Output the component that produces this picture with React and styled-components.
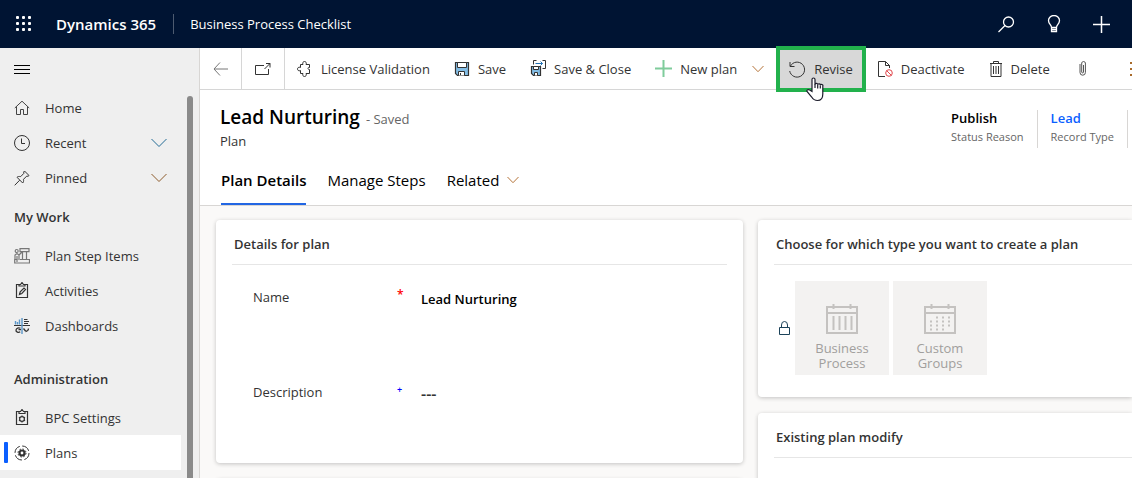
import React from "react";
import styled, { createGlobalStyle, css } from "styled-components";

const GlobalStyle = createGlobalStyle`
  *, *::before, *::after { box-sizing: border-box; }
  body { margin: 0; font-family: "Open Sans", "Noto Sans", sans-serif; font-size: 13px; color: #333; background: #faf9f8; }
  button, input { font: inherit; color: inherit; }
  button { border: 0; padding: 0; background: none; cursor: pointer; }
  a { color: inherit; text-decoration: none; }
  h1, h2, h3, p, ul, dl, dd, dt { margin: 0; padding: 0; }
  ul { list-style: none; }
  svg { display: block; flex: none; }
`;

const Page = styled.div`
  display: flex;
  flex-direction: column;
  height: 100vh;
  overflow: hidden;
`;
const TopBar = styled.header`
  display: flex;
  align-items: center;
  flex: none;
  height: 48px;
  padding: 0 22px 0 16px;
  background: #001433;
  color: #fff;
`;
const Brand = styled.a`
  margin-left: 24px;
  font-size: 15px;
  font-weight: 600;
`;
const BrandRule = styled.span`
  width: 1px;
  height: 20px;
  margin: 0 16px 0 17px;
  background: #4d5b70;
`;
const AppName = styled.a`
  font-size: 13px;
`;
const TopActions = styled.div`
  display: flex;
  gap: 31px;
  margin-left: auto;
`;
const IconButton = styled.button`
  display: flex;
  align-items: center;
  justify-content: center;
`;
const Shell = styled.div`
  display: grid;
  grid-template-columns: 200px minmax(0, 1fr);
  flex: 1;
  min-height: 0;
`;
const Sidebar = styled.aside`
  display: flex;
  flex-direction: column;
  min-height: 0;
  background: #efefef;
  border-right: 1px solid #d8d6d4;
`;
const MenuRow = styled.div`
  display: flex;
  align-items: center;
  flex: none;
  height: 42px;
  padding-left: 14px;
`;
const NavArea = styled.div`
  display: flex;
  flex: 1;
  min-height: 0;
`;
const Nav = styled.nav`
  flex: 1;
  overflow: hidden;
`;
const ScrollTrack = styled.div`
  width: 18px;
  padding: 6px 6px 0;
`;
const ScrollThumb = styled.div`
  height: 100%;
  border-radius: 3px 3px 0 0;
  background: #8a8a8a;
`;
const NavHeading = styled.h2`
  display: flex;
  align-items: center;
  height: 43px;
  padding-left: 14px;
  font-size: 13px;
  font-weight: 600;
  ul + & { margin-top: ${(p) => (p.$spaced ? 14 : 0)}px; }
`;
const NavLink = styled.a`
  position: relative;
  display: flex;
  align-items: center;
  gap: 15px;
  height: 35px;
  padding: 0 14px;
  ${(p) => p.$active && css`
    background: #fff;
    &::before {
      content: "";
      position: absolute;
      left: 4px;
      top: 7px;
      width: 4px;
      height: 21px;
      border-radius: 1px;
      background: #0b5fff;
    }
  `}
  > svg:last-child:not(:first-child) { margin-left: auto; }
`;
const Main = styled.main`
  display: flex;
  flex-direction: column;
  min-width: 0;
  min-height: 0;
`;
const CommandBar = styled.div`
  display: flex;
  flex: none;
  height: 42px;
  background: #fff;
  border-bottom: 1px solid #d6d6d6;
`;
const SquareCommand = styled(IconButton)`
  flex: none;
  width: ${(p) => p.$width}px;
  border-right: 1px solid #d6d6d6;
`;
const Command = styled.button`
  position: relative;
  display: flex;
  align-items: center;
  flex: none;
  gap: 8px;
  padding: 0 12px;
  white-space: nowrap;
`;
const HighlightedCommand = styled(Command)`
  height: 42px;
  background: #d8d8d8;
  &::after {
    content: "";
    position: absolute;
    inset: -2px -1px;
    border: 4px solid #22b14c;
  }
`;
const Pointer = styled.svg`
  position: absolute;
  z-index: 2;
  left: 29px;
  top: 29px;
`;
const SplitToggle = styled(IconButton)`
  width: 12px;
  margin: 0 13px 0 3px;
`;
const Overflow = styled(IconButton)`
  width: 4px;
  margin-left: auto;
  margin-right: -2px;
`;
const RecordHeader = styled.section`
  flex: none;
  background: #fff;
  border-bottom: 1px solid #d8d6d4;
`;
const RecordTop = styled.div`
  display: flex;
  justify-content: space-between;
  height: 71px;
  padding: 13px 4px 0 20px;
`;
const TitleLine = styled.div`
  display: flex;
  align-items: baseline;
  gap: 6px;
  line-height: 28px;
`;
const Title = styled.h1`
  color: #000;
  font-size: 19px;
  font-weight: 600;
`;
const SaveState = styled.span`
  color: #666;
`;
const Entity = styled.p`
  line-height: 16px;
`;
const Facts = styled.dl`
  display: flex;
  height: 38px;
  margin-top: 7px;
`;
const Fact = styled.div`
  display: flex;
  flex-direction: column-reverse;
  padding: 0 13px 1px;
  border-right: 1px solid #d8d6d4;
`;
const FactName = styled.dt`
  color: #666;
  font-size: 11px;
  line-height: 20px;
`;
const FactValue = styled.dd`
  color: ${(p) => (p.$link ? "#0b5fff" : "#000")};
  font-weight: 600;
  line-height: 18px;
`;
const Tabs = styled.div`
  display: flex;
  gap: 21px;
  padding: 0 21px;
`;
const Tab = styled.button`
  display: flex;
  align-items: center;
  gap: 8px;
  height: 44px;
  padding-bottom: 4px;
  border-bottom: 2px solid ${(p) => (p.$active ? "#2266e3" : "transparent")};
  color: #000;
  font-size: 15px;
  font-weight: ${(p) => (p.$active ? 600 : 400)};
`;
const Form = styled.div`
  display: grid;
  grid-template-columns: minmax(0, 527fr) minmax(0, 374fr);
  gap: 15px;
  flex: 1;
  min-height: 0;
  padding: 14px 0 0 16px;
`;
const Column = styled.div`
  display: flex;
  flex-direction: column;
  gap: 16px;
`;
const Card = styled.section`
  flex: none;
  min-height: ${(p) => p.$minHeight}px;
  padding: ${(p) => (p.$bleed ? "0 0 0 16px" : "0 16px")};
  border-radius: ${(p) => (p.$bleed ? "4px 0 0 4px" : "4px")};
  background: #fff;
  box-shadow: 0 1px 4px rgba(0, 0, 0, 0.22);
`;
const CardTitle = styled.h2`
  height: 45px;
  padding: 14px 2px 0;
  border-bottom: 1px solid #e6e6e6;
  font-size: 13px;
  font-weight: 600;
  line-height: 20px;
`;
const Fields = styled.div`
  display: flex;
  flex-direction: column;
  gap: 71px;
  padding: 22px 21px;
`;
const Field = styled.div`
  display: grid;
  grid-template-columns: 144px 24px minmax(0, 1fr);
  line-height: 20px;
`;
const Mark = styled.span`
  color: ${(p) => p.$color};
  font-size: ${(p) => p.$size}px;
  font-weight: 600;
  line-height: 16px;
`;
const Value = styled.input`
  width: 100%;
  height: 24px;
  padding: 0;
  border: 0;
  outline: 0;
  background: none;
  color: ${(p) => (p.$empty ? "#333" : "#000")};
  font-size: ${(p) => (p.$empty ? 16 : 13)}px;
  font-weight: 600;
  line-height: 20px;
`;
const Tiles = styled.div`
  display: flex;
  align-items: center;
  gap: 4px;
  padding: 16px 4px;
`;
const Tile = styled.button`
  display: flex;
  flex-direction: column;
  align-items: center;
  justify-content: flex-end;
  gap: 6px;
  width: 94px;
  height: 94px;
  padding-bottom: 4px;
  background: #f3f2f1;
  color: #a19f9d;
  line-height: 15px;
`;
const TileLabel = styled.span`
  width: 60px;
`;

function Icon({ w = 16, h = w, children, color = "#333", sw = 1 }) {
  return (
    <svg width={w} height={h} viewBox={`0 0 ${w} ${h}`} fill="none" stroke={color} strokeWidth={sw} aria-hidden="true">
      {children}
    </svg>
  );
}

const Waffle = () => (
  <Icon w={16} color="none">
    {[0, 6, 12].map((y) => [0, 6, 12].map((x) => <rect key={`${x}-${y}`} x={x} y={y} width="3" height="3" rx="1" fill="#fff" />))}
  </Icon>
);
const Chevron = ({ w = 12, color = "#b5743a" }) => (
  <Icon w={w} h={w === 16 ? 10 : 8} color={color}><path d={w === 16 ? "M.5 1 8 8.500 15.500 1" : "M.5 1 6 6.700 11.500 1"} /></Icon>
);
const Search = () => <Icon w={17} color="#fff" sw={1.3}><circle cx="10.500" cy="6" r="5" /><path d="M7 9.500.5 16" /></Icon>;
const Bulb = () => (
  <Icon w={16} h={18} color="#fff" sw={1.3}><path d="M5.500 12.500c0-3-3-3.500-3-7a5.500 5 0 0 1 11 0c0 3.500-3 4-3 7zM5.500 12.500v4h5v-4M5.500 14.500h5" /></Icon>
);
const Plus = ({ color, sw }) => <Icon w={17} color={color} sw={sw}><path d="M8.500 0v17M0 8.500h17" /></Icon>;
const Burger = () => <Icon w={16} h={9} color="#000"><path d="M0 .5h16M0 4.500h16M0 8.500h16" /></Icon>;
const Home = () => <Icon color="#444"><path d="M.8 8 8 1.200 15.200 8M2.500 6.500v8h4v-5h3v5h4v-8" /></Icon>;
const Clock = () => <Icon><circle cx="8" cy="8" r="7.500" /><path d="M7.500 3.500v5h3.500" /></Icon>;
const Pin = () => <Icon><path d="m10.500 1 4.500 4.500-1 .8-1.300-.2-3.200 3.200c.3 1.700 0 2.900-.8 3.700L3 7.300c.9-.8 2-1 3.700-.7L9.900 3.300 9.700 2zM5.700 10.200.7 15.300" /></Icon>;
const StepItems = () => (
  <Icon color="#777" sw={1.2}><path d="M6 .7h9v3H6zM8.500 4v7M12.500 4v7M6 11.500h9.500v3.500H.7v-3.500h3M3 5.500 1 7v4M3 5.500 5 7v5M3 8v6M5 7l3-3" /><circle cx="2.700" cy="3" r="1.500" /></Icon>
);
const Activity = () => <Icon w={16} h={17}><path d="M5 2.500H2.500v13h11v-13H11M5 4V2.500h1.500l1.500-2 1.500 2H11V4zM5.500 12.500l.7-2.600L10 6l1.500 1.500-3.700 4z" strokeWidth="1.200" /></Icon>;
const Dashboard = () => (
  <Icon>
    <path d="M0 7.500h16M10 1.500h3.500M10 3.500h5M10 5.500h4" />
    <path d="M1.500 3v3.500M3.500 4v2.500M5.500 1.500v5M8 0v16" stroke="#5b97c9" strokeWidth="1.400" />
    <path d="M6.500 10.300c-1.800-1-4.200-.3-4.500 1.700s2.500 3 4.200 1.700M4.500 11.700h2.500M9.500 10.500l2 2.500M11.500 13.500c1.500 0 3-1.300 3-3" strokeWidth="1.300" />
  </Icon>
);
const Gear = () => (
  <Icon w={16} h={17} sw={1.2}><path d="M5 2.500H2.500v13h11v-13H11M5 4.500v-2h1.500l1.500-2 1.500 2H11v2z" /><circle cx="8" cy="10" r="2.400" /><path d="M8 6.500v1M8 12.500v1M5 8.300l1 .6M10 11l1 .7M11 8.300l-1 .6M5 11.700l1-.7" /></Icon>
);
const Plans = () => (
  <Icon><circle cx="8" cy="8" r="7" strokeDasharray="8.500 2.495" /><circle cx="8" cy="8" r="2.500" strokeWidth="2.200" /><circle cx="8" cy="8" r="4" strokeWidth="1" strokeDasharray="1.600 1.542" /></Icon>
);
const Back = () => <Icon w={16} color="#777"><path d="M15 8H1M7 1.500 1 8l6 6.500" /></Icon>;
const PopOut = () => <Icon w={16} h={14}><path d="M9 3.500H.5v9h13V7M9.500 7 15 1.500M11 1.500h4v4" /></Icon>;
const Puzzle = () => (
  <Icon w={16}><path d="M3.500 3.500H6C5 1.500 6.500.5 7.500.5S10 1.500 9 3.500h3.500v3c-2-.8-2 2.500 0 2v4H9c1 2-.5 3-1.500 3S5 14.500 6 12.500H3.500V9.500C1.500 10.500.5 9 .5 8s1-2.500 3-1.500z" /></Icon>
);
const Save = () => (
  <Icon w={16}><path d="M1.500 1.500h13v13h-11l-2-2z" fill="#83bde5" strokeWidth="1.200" /><path d="M3.500 1.500h9v5h-9z" fill="#fff" /><path d="M4.500 14.500v-4h6v4" fill="#fff" /><path d="M6.500 12v2" /></Icon>
);
const SaveClose = () => (
  <Icon w={16} h={17}><path d="M1.500 6.500h9v9h-7l-2-2z" fill="#83bde5" strokeWidth="1.200" /><path d="M3.500 6.500h5v3h-5zM4.500 15.500v-3h3v3" fill="#fff" /><path d="M3.500 4.500v-4h3M12.500.5h3v8h-3" /><path d="M5.500 3.500h7M10.500 1.500l2 2-2 2" stroke="#1f6fb2" /></Icon>
);
const Revise = () => <Icon w={17}><path d="M1.500 5a7.500 7.500 0 1 1-.8 5M1 1v4.500h4.500" /></Icon>;
const Deactivate = () => (
  <Icon w={16}><path d="M8 15.500H1.500V.5h7l4 4V7M8.500.5v4h4" /><g stroke="#e0474c"><circle cx="12" cy="12" r="3.300" /><path d="m9.700 9.700 4.600 4.600" /></g></Icon>
);
const Trash = () => <Icon w={14} h={16}><path d="M1 2.500h12M4.500 2V.5h5V2M2 2.500v13h10v-13M4.500 5v8M7 5v8M9.500 5v8" /></Icon>;
const Clip = () => <Icon w={16} h={17} color="#555"><path d="M6 4v8.500a2.700 2.700 0 0 0 5.400 0V3a1.900 1.900 0 0 0-3.700 0v9a.9.9 0 0 0 1.800 0V5" /></Icon>;
const Dots = () => <Icon w={4} h={16} color="none"><path fill="#a86a2a" d="M0 1h2v2H0zM0 7h2v2H0zM0 13h2v2H0z" /></Icon>;
const Lock = () => <Icon w={13} h={15} color="#1c4259"><path d="M1.500 6.500h10v7h-10zM3.500 6.500V4a3 3.500 0 0 1 6 0v2.500" /></Icon>;
const Calendar = ({ dots }) => (
  <Icon w={34} h={32} color="#c4c2c0" sw={2}>
    <path d="M2 4h30v26H2zM2 10h30" />
    <path d="M8.500 1v5M25.500 1v5" />
    {dots
      ? <path d="M13 14.500h14M7 18.500h20M7 22.500h20M7 26.500h14" strokeDasharray="2 4" />
      : <path d="M8.500 13v14M14.500 13v14M20.500 13v14M26.500 13v14" />}
  </Icon>
);

const groups = [
  { items: [["Home", Home], ["Recent", Clock, "#226a94"], ["Pinned", Pin, "#8c5a2b"]] },
  { title: "My Work", items: [["Plan Step Items", StepItems], ["Activities", Activity], ["Dashboards", Dashboard]] },
  { title: "Administration", spaced: true, items: [["BPC Settings", Gear], ["Plans", Plans]] },
];

export default function App() {
  return (
    <Page>
      <GlobalStyle />
      <TopBar>
        <IconButton aria-label="App launcher"><Waffle /></IconButton>
        <Brand href="#">Dynamics 365</Brand>
        <BrandRule />
        <AppName href="#">Business Process Checklist</AppName>
        <TopActions>
          <IconButton aria-label="Search"><Search /></IconButton>
          <IconButton aria-label="Ideas"><Bulb /></IconButton>
          <IconButton aria-label="Add"><Plus color="#fff" sw={1.5} /></IconButton>
        </TopActions>
      </TopBar>
      <Shell>
        <Sidebar>
          <MenuRow><IconButton aria-label="Menu"><Burger /></IconButton></MenuRow>
          <NavArea>
            <Nav>
              {groups.map((g, i) => (
                <React.Fragment key={i}>
                  {g.title && <NavHeading $spaced={g.spaced}>{g.title}</NavHeading>}
                  <ul>
                    {g.items.map(([label, Glyph, chevron]) => (
                      <li key={label}>
                        <NavLink href="#" $active={label === "Plans"}>
                          <Glyph />
                          {label}
                          {chevron && <Chevron w={16} color={chevron} />}
                        </NavLink>
                      </li>
                    ))}
                  </ul>
                </React.Fragment>
              ))}
            </Nav>
            <ScrollTrack><ScrollThumb /></ScrollTrack>
          </NavArea>
        </Sidebar>
        <Main>
          <CommandBar>
            <SquareCommand $width={42} aria-label="Back"><Back /></SquareCommand>
            <SquareCommand $width={43} aria-label="Open in new window"><PopOut /></SquareCommand>
            <Command><Puzzle />License Validation</Command>
            <Command><Save />Save</Command>
            <Command><SaveClose />Save &amp; Close</Command>
            <Command><Plus color="#7fcc9b" sw={2} />New plan</Command>
            <SplitToggle aria-label="More new options"><Chevron /></SplitToggle>
            <HighlightedCommand>
              <Revise />Revise
              <Pointer width="18" height="25" viewBox="0 0 18 25" fill="#fff" stroke="#1c1c2b" strokeWidth="1.200" aria-hidden="true">
                <path d="M6 14.500V2.500a1.500 1.500 0 0 1 3 0V7.500a1.300 1.300 0 0 1 2.700.3 1.300 1.300 0 0 1 2.600.6 1.300 1.300 0 0 1 2.500.8V17c0 4.500-2 6.500-5.300 6.500-2.800 0-4.300-1-5.800-3.500L1 14.500c-.6-1.800 1.400-2.500 2.700-1.400z" />
                <path d="M9 7v4M11.700 8v3.500M14.300 8.500v3" />
              </Pointer>
            </HighlightedCommand>
            <Command><Deactivate />Deactivate</Command>
            <Command><Trash />Delete</Command>
            <Command aria-label="Attach"><Clip /></Command>
            <Overflow aria-label="More commands"><Dots /></Overflow>
          </CommandBar>
          <RecordHeader>
            <RecordTop>
              <div>
                <TitleLine><Title>Lead Nurturing</Title><SaveState>- Saved</SaveState></TitleLine>
                <Entity>Plan</Entity>
              </div>
              <Facts>
                <Fact><FactName>Status Reason</FactName><FactValue>Publish</FactValue></Fact>
                <Fact><FactName>Record Type</FactName><FactValue $link><a href="#">Lead</a></FactValue></Fact>
              </Facts>
            </RecordTop>
            <Tabs role="tablist">
              <Tab role="tab" aria-selected="true" $active>Plan Details</Tab>
              <Tab role="tab">Manage Steps</Tab>
              <Tab role="tab">Related<Chevron /></Tab>
            </Tabs>
          </RecordHeader>
          <Form>
            <Column>
              <Card $minHeight={243}>
                <CardTitle>Details for plan</CardTitle>
                <Fields>
                  <Field>
                    <label htmlFor="name">Name</label>
                    <Mark $color="#f00" $size={12}>*</Mark>
                    <Value id="name" readOnly value="Lead Nurturing" />
                  </Field>
                  <Field>
                    <label htmlFor="description">Description</label>
                    <Mark $color="#00f" $size={9}>+</Mark>
                    <Value id="description" $empty readOnly value="---" />
                  </Field>
                </Fields>
              </Card>
              <Card $minHeight={177} />
            </Column>
            <Column>
              <Card $bleed $minHeight={177}>
                <CardTitle>Choose for which type you want to create a plan</CardTitle>
                <Tiles>
                  <Lock />
                  <Tile><Calendar /><TileLabel>Business Process</TileLabel></Tile>
                  <Tile><Calendar dots /><TileLabel>Custom Groups</TileLabel></Tile>
                </Tiles>
              </Card>
              <Card $bleed $minHeight={177}>
                <CardTitle>Existing plan modify</CardTitle>
              </Card>
            </Column>
          </Form>
        </Main>
      </Shell>
    </Page>
  );
}
